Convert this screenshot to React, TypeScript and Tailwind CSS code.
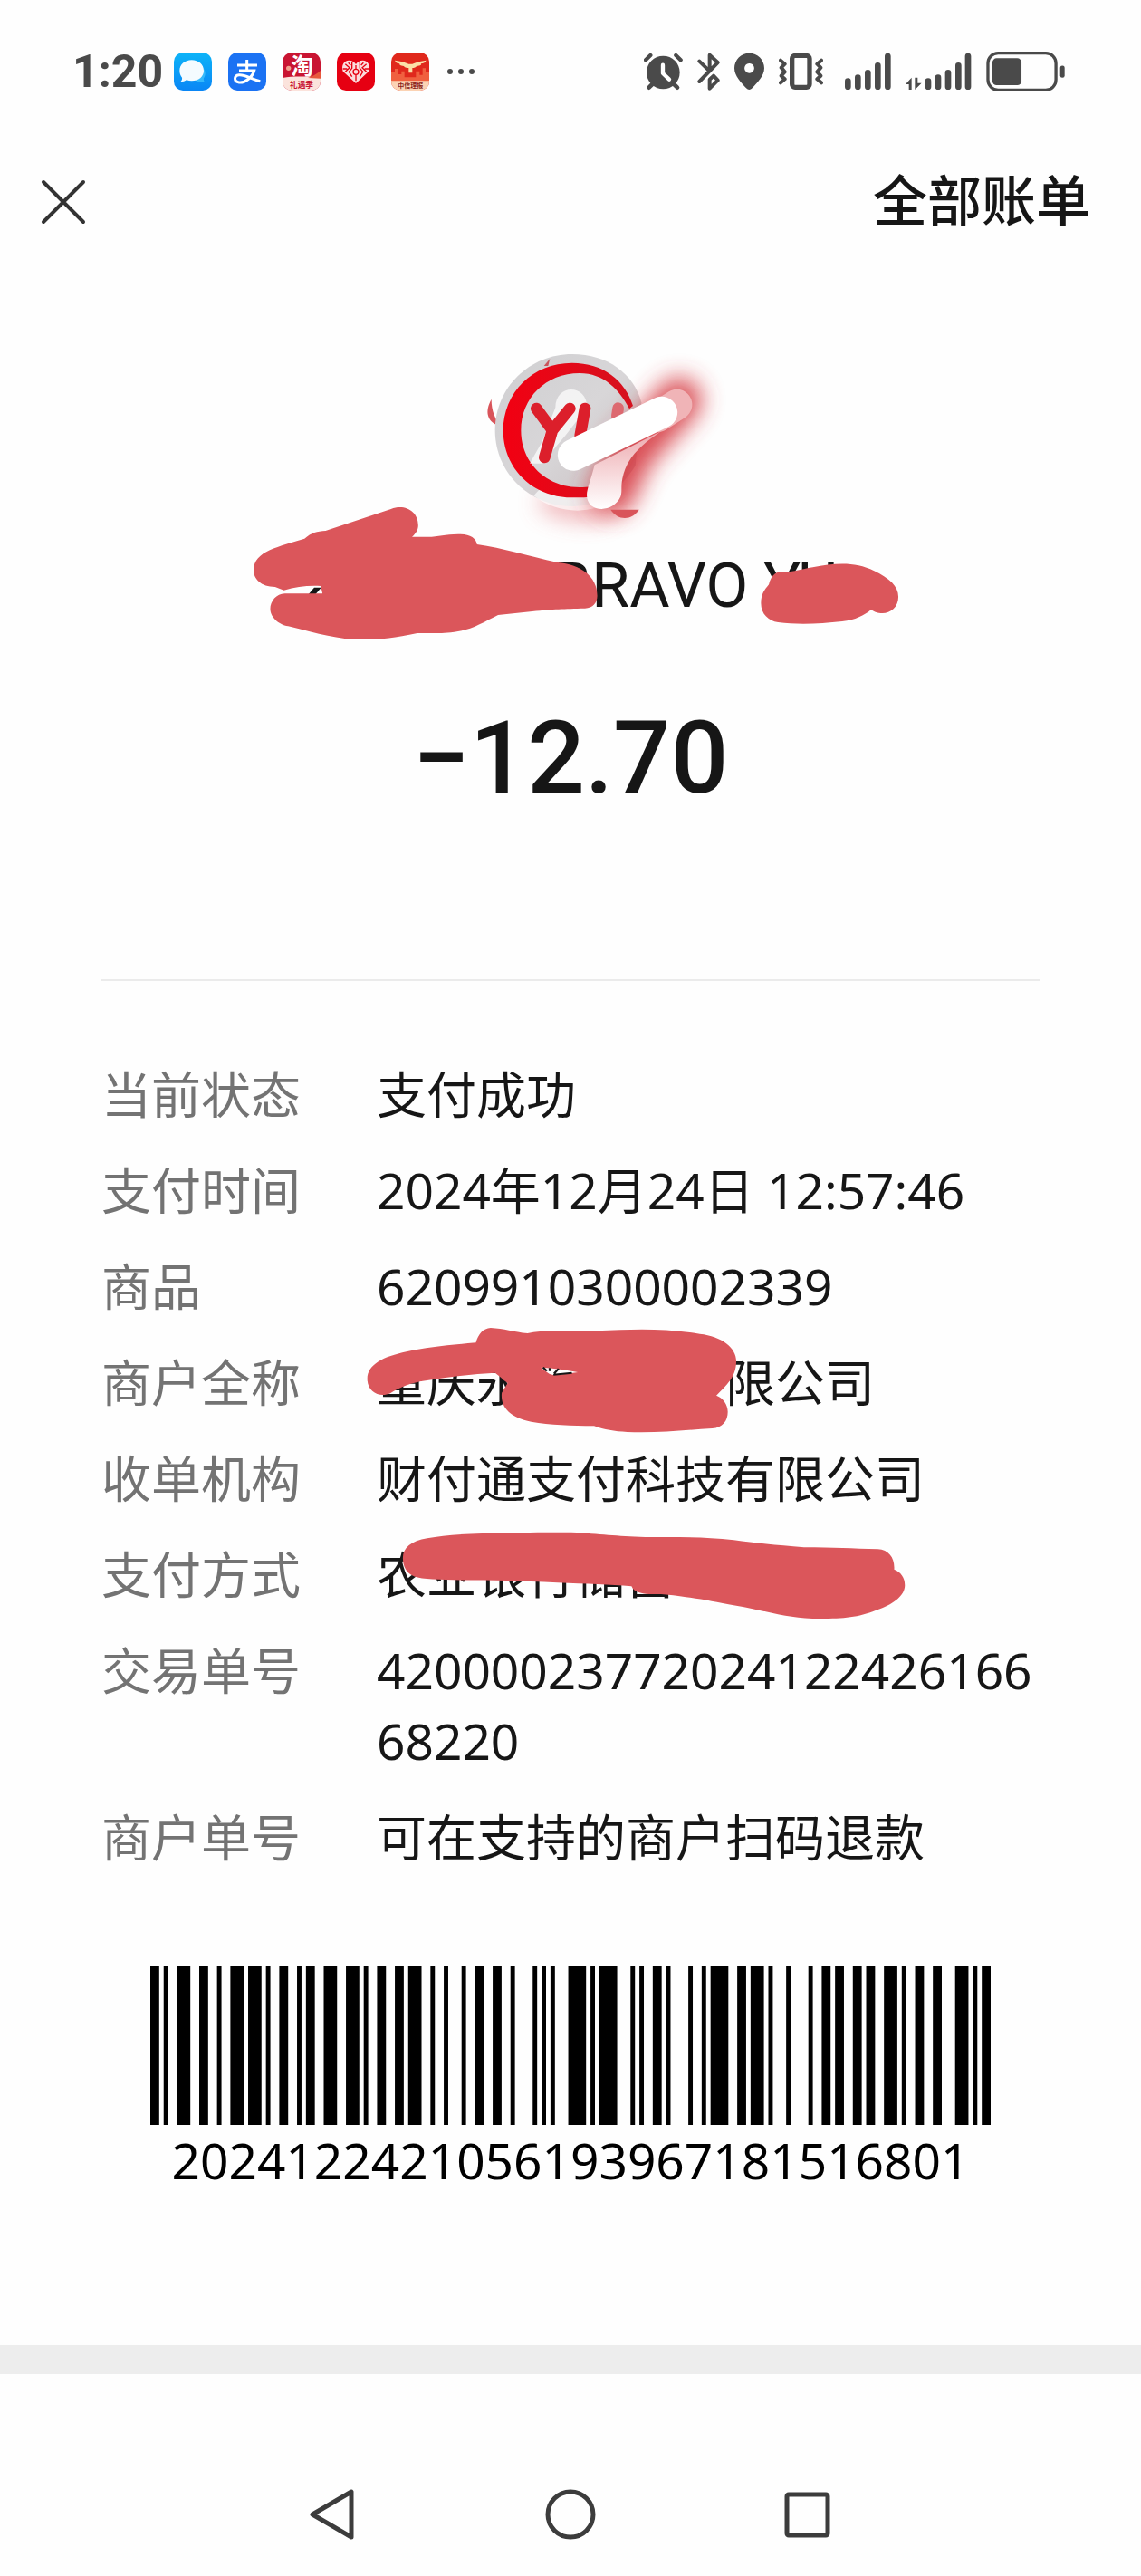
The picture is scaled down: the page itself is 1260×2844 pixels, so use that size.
import React from "react";

const INK = "#4a4a4a";
const MARKER = "#db565b";

// Code 128 bar/space widths for the symbols used by the receipt number
const CODE128: Record<string, string> = {
  "01": "222122",
  "05": "131222",
  "12": "112232",
  "20": "221231",
  "21": "213212",
  "24": "311222",
  "51": "213113",
  "61": "221411",
  "68": "141221",
  "71": "122114",
  "81": "121142",
  "93": "111341",
  "96": "114311",
};
const START_C = "211232";
const STOP = "2331112";

const RECEIPT_NO = "2024122421056193967181516801";
const CHECKSUM = "24";

const getBars = (value: string) => {
  const pairs = (value + CHECKSUM).match(/../g) ?? [];
  const widths = START_C + pairs.map((pair) => CODE128[pair]).join("") + STOP;
  const bars: { x: number; width: number }[] = [];
  let x = 0;
  widths.split("").forEach((w, i) => {
    if (i % 2 === 0) bars.push({ x, width: Number(w) });
    x += Number(w);
  });
  return { bars, total: x };
};

const Barcode = ({ value }: { value: string }) => {
  const { bars, total } = getBars(value);
  return (
    <svg viewBox={`0 0 ${total} 10`} preserveAspectRatio="none" className="w-full h-[175px]" role="img" aria-label={value}>
      {bars.map((bar) => (
        <rect key={bar.x} x={bar.x} y="0" width={bar.width} height="10" />
      ))}
    </svg>
  );
};

const AppIcons = () => (
  <div className="flex items-center gap-[18px]">
    <svg viewBox="0 0 126 126" className="w-[42px] h-[42px]">
      <defs>
        <linearGradient id="msg" x1="0" y1="0" x2="0" y2="1">
          <stop offset="0" stopColor="#0db4f8" />
          <stop offset="1" stopColor="#0a86f5" />
        </linearGradient>
      </defs>
      <rect width="126" height="126" rx="30" fill="url(#msg)" />
      <path d="M70 92c12 6 24 8 34 7-5-4-6-8-5-14 6-8 7-20 1-30z" fill="#35b9fb" />
      <path d="M59 25c23 0 40 15 40 35S82 94 59 94c-6 0-12-1-17-3-5 4-12 6-20 6 4-4 6-9 5-14-5-6-8-14-8-23 0-20 17-35 40-35z" fill="#f4fbff" />
    </svg>
    <svg viewBox="0 0 126 126" className="w-[42px] h-[42px]">
      <rect width="126" height="126" rx="30" fill="#1b72f3" />
      <g fill="none" stroke="#fff" strokeWidth="9">
        <path d="M30 42h66M62 24v36M36 60h50C80 82 56 101 36 99c-18-2-18-23 0-25 20-2 40 14 70 21" />
      </g>
    </svg>
    <svg viewBox="0 0 126 126" className="w-[42px] h-[42px] overflow-visible">
      <rect width="126" height="126" rx="30" fill="#c91532" />
      <path d="M0 84c40-8 85-4 126-2v14a30 30 0 0 1-30 30H30a30 30 0 0 1-30-30z" fill="#fbe3dc" />
      <path d="M84 84c14-4 28-12 42-24v26z" fill="#e8593d" />
      <circle cx="20" cy="52" r="8" fill="#f0a08c" />
      <text x="28" y="72" fontSize="74" fontWeight="700" fill="#fff" className="font-['Noto_Sans_CJK_SC',sans-serif]">淘</text>
      <text x="24" y="118" fontSize="26" fontWeight="700" fill="#c91532" className="font-['Noto_Sans_CJK_SC',sans-serif]">礼遇季</text>
    </svg>
    <svg viewBox="0 0 126 126" className="w-[42px] h-[42px]">
      <rect width="126" height="126" rx="30" fill="#e60012" />
      <path d="M63 102 20 62c-6-20 4-36 20-36 10 0 18 5 23 13 5-8 13-13 23-13 16 0 26 16 20 36z" fill="#fbdcdc" />
      <g fill="none" stroke="#e60012" strokeWidth="4">
        <path d="M28 38l14 12-14 14M98 38 84 50l14 14M50 30v22l-10 12 10 16M76 30v22l10 12-10 16M63 42v14M63 74v20M20 54h14M92 54h14M38 34l8 8M88 34l-8 8" />
        <circle cx="63" cy="64" r="9" />
      </g>
    </svg>
    <svg viewBox="0 0 126 126" className="w-[42px] h-[42px] overflow-visible">
      <rect width="126" height="126" rx="30" fill="#e0281c" />
      <path d="M0 64h12V54h10v18h12V62h10v20h38V62h12v12h10V52h10v12h12v36H0z" fill="#f0603f" />
      <path d="M12 26c18 2 34 6 46 12h12c12-6 28-10 46-12-4 8-10 10-18 11 4 3 0 7-14 8-2 5-8 6-14 6v16H58V51c-8 0-14-1-16-6-12-1-16-5-14-8-8-1-12-3-16-11z" fill="#fbe0a8" />
      <path d="M0 94h126v2a30 30 0 0 1-30 30H30A30 30 0 0 1 0 96z" fill="#fbd3b4" />
      <text x="22" y="117" fontSize="21" fontWeight="700" fill="#8c2418" className="font-['Noto_Sans_CJK_SC',sans-serif]">中信理报</text>
    </svg>
  </div>
);

const SystemIcons = () => (
  <div className="flex items-center gap-4">
    <svg viewBox="64 51 129 126" className="w-[43px] h-[42px]" fill="none" stroke={INK} strokeLinecap="round">
      <circle cx="128" cy="117" r="55" fill={INK} stroke="none" />
      <path d="M70 76 86 60M186 76 170 60" strokeWidth="13" />
      <path d="M92 156 81 167M164 156l11 11" strokeWidth="14" />
      <path d="M127 92v28l21 20" stroke="#fff" strokeWidth="13" strokeLinejoin="round" />
    </svg>
    <svg viewBox="240 51 75 126" className="w-[25px] h-[42px]" fill="none" stroke={INK} strokeWidth="12" strokeLinecap="round" strokeLinejoin="round">
      <path d="M247 80l34 33V59l27 25-61 63M281 146v24l27-27-14-15-13 12z" />
    </svg>
    <svg viewBox="363 51 99 126" className="w-[33px] h-[42px]">
      <path fillRule="evenodd" d="M412 53c28 0 50 22 50 50 0 26-24 48-40 66q-10 10-20 0c-16-18-39-40-39-66 0-28 22-50 49-50zm0 34a16 16 0 1 0 1 0z" fill={INK} />
    </svg>
    <svg viewBox="510 51 147 126" className="w-[49px] h-[42px]" fill="none" stroke={INK} strokeLinecap="round" strokeLinejoin="round">
      <rect x="554" y="61" width="58" height="105" rx="10" strokeWidth="16" />
      <path d="M516 77l14 12-12 12 12 14-12 13 12 11-14 12M651 77l-14 12 12 12-12 14 12 13-12 11 14 12" strokeWidth="12" />
    </svg>
    <svg viewBox="730 51 153 126" className="w-[51px] h-[42px] ml-2" stroke={INK} strokeWidth="20" strokeLinecap="round">
      <path d="M740 146v18M773 134v30M806 118v46M839 94v70M872 63v101" />
    </svg>
    <svg viewBox="931 51 219 126" className="w-[73px] h-[42px]" stroke={INK} strokeWidth="20" strokeLinecap="round">
      <path d="M1006 146v18M1039 134v30M1072 118v46M1106 94v70M1138 63v101" />
      <path d="M931 156l20-22v40h-9v-18zM962 134h9v18h13l-22 22z" strokeWidth="0" fill={INK} />
    </svg>
    <svg viewBox="1197 47 261 133" className="w-[87px] h-[44px]">
      <rect x="1202" y="52" width="227" height="123" rx="34" fill="none" stroke={INK} strokeWidth="10" />
      <rect x="1217" y="69" width="97" height="90" rx="14" fill={INK} />
      <rect x="1443" y="94" width="15" height="40" rx="7" fill={INK} />
    </svg>
  </div>
);

const MerchantLogo = () => (
  <svg viewBox="0 0 960 660" className="w-[320px] h-[220px] overflow-visible" role="img" aria-label="YU">
    <defs>
      <filter id="glow" filterUnits="userSpaceOnUse" x="0" y="-100" width="1160" height="960">
        <feGaussianBlur stdDeviation="38" />
      </filter>
      <linearGradient id="metal" x1="0" y1="0" x2="1" y2="1">
        <stop offset="0" stopColor="#cfcfd1" />
        <stop offset="0.5" stopColor="#d8d6d8" />
        <stop offset="1" stopColor="#c6bcbe" />
      </linearGradient>
      <linearGradient id="ring" x1="0" y1="0" x2="1" y2="0">
        <stop offset="0" stopColor="#f20012" />
        <stop offset="1" stopColor="#d5121f" />
      </linearGradient>
      <linearGradient id="tail" x1="0" y1="0" x2="0" y2="1">
        <stop offset="0" stopColor="#eda9ae" />
        <stop offset="1" stopColor="#ffffff" />
      </linearGradient>
    </defs>
    <path d="M128 212c-22 40-18 76 34 92-22-24-34-54-34-92z" fill="#d9545a" />
    <path d="M300 540 Q400 600 520 570" fill="none" stroke="#e88a90" strokeWidth="60" opacity="0.8" filter="url(#glow)" />
    <path d="M395 63c120 0 205 66 230 160l-20 210c-60 90-120 134-210 134-140 0-255-110-255-252S255 63 395 63z" fill="url(#metal)" />
    <path d="M268 532c80 62 190 64 270 12l-30-24-220-10z" fill="#fff" opacity="0.65" />
    <path d="M750 215 590 390 530 520" fill="none" stroke="#d63a43" strokeWidth="150" strokeLinecap="round" strokeLinejoin="round" opacity="0.9" filter="url(#glow)" />
    <path fillRule="evenodd" d="M395 92c104 0 176 58 202 142l-12 10C552 180 500 126 420 126c-112 0-194 82-194 190s84 188 194 188c30 0 50-4 80-16l-30 46c-20 4-50 4-75 4-130 0-228-96-228-222S265 92 395 92z" fill="url(#ring)" />
    <path d="M302 102 322 78l-6 24z" fill="#c9545c" />
    <path d="M340 240c0-80 105-80 105 0l-70 90-80 95h-40l40-70z" fill="#fff" opacity="0.7" />
    <g fill="none" stroke="#dc1f2b" strokeWidth="38" strokeLinecap="round" strokeLinejoin="round">
      <path d="M277 243l53 72 58-72M330 315 304 405" />
      <path d="M438 243l-16 90" />
      <path d="M548 242l-4 26" stroke="#dd6970" />
    </g>
    <path d="M523 578h94c-26 38-70 36-94 0z" fill="#d9545a" />
    <path d="M470 430c-10 40-26 80-26 100 0 58 86 62 112 5 6-20 0-30 6-60 14-70 60-110 130-158z" fill="url(#tail)" />
    <path d="M742 230 680 270" stroke="#f0b4b7" strokeWidth="102" strokeLinecap="round" />
    <path d="M400 397 692 256" stroke="#fff" strokeWidth="105" strokeLinecap="round" />
  </svg>
);

const TitleMarks = () => (
  <svg viewBox="-20 0 1568 540" preserveAspectRatio="none" className="absolute left-0 -top-[50px] w-[760px] h-[180px]" aria-hidden="true">
    <path d="M166 350 180 326h16l-14 24z" fill="#161616" />
    <path
      d="M355 66c32-18 62 8 62 54 0 16-6 28-14 38h36c26 0 40-10 74-9 24 1 36 14 38 34 60 12 114 38 184 60 50 6 90 44 90 110 0 24-10 40-28 42-50 2-70 2-120 10l-78 12c-34 24-60 50-100 56-36 6-54 4-84 4-50 16-82 21-126 21-54 0-100-20-164-43-22-2-45-28-45-58 0-26 14-50 33-51h86l-4-25c-30-2-56 2-84 14l-20-11c-32 0-49-26-49-56 0-64 60-78 116-104 16-20 28-24 48-26z"
      fill={MARKER}
    />
    <path
      d="M1198 378c0-30 8-44 18-62 4-24 12-42 30-42 26 2 40-8 70-15 50-14 96-20 140 12 34 24 55 50 55 86 0 34-18 54-36 54-12 0-18-4-26-12-16 20-36 34-66 39-50 8-100 12-146 3-22-4-39-28-39-63z"
      fill={MARKER}
    />
  </svg>
);

const MerchantMarks = () => (
  <svg viewBox="60 70 1020 360" preserveAspectRatio="none" className="absolute -left-3 -top-6 w-[416px] h-[120px]" aria-hidden="true">
    <path
      fillRule="evenodd"
      d="M358 128c6-28 20-48 40-49 36 2 62 14 100 18 50-14 120-2 186-8 100-6 180-10 280 10 60 8 99 46 99 90 0 54-30 84-54 114 18 8 31 30 31 54 0 30-14 52-42 55-80 6-150 16-230 12-36-2-62-8-90-20-60-2-120-2-170-14-60-14-84-50-80-96l16-32c-12-10-20-22-34-34-60 4-120 12-180 24-46 8-76 22-104 44-30 16-62-6-62-48 0-48 44-74 106-90 56-16 120-22 188-30zM534 210c16 14 20 26 44 25l56-9c-32-8-66-14-100-16z"
      fill={MARKER}
    />
    <path d="M540 210l10 12M558 212v10M582 214l-12 16M568 234l50-6" stroke="#161616" strokeWidth="6" />
  </svg>
);

const PaymentMarks = () => (
  <svg viewBox="150 740 1390 310" preserveAspectRatio="none" className="absolute left-6 -top-3 w-[567px] h-[103px]" aria-hidden="true">
    <path
      d="M162 840c0-34 22-58 66-66 80-18 200-20 390-20 80 6 120 12 200 16 80 0 150-2 240 10 60 10 110 16 190 24 80 0 130 4 200 6 30 2 46 30 44 68 18 8 29 28 29 52 0 34-30 60-66 78-60 30-100 34-184 33-80-4-130-28-210-44-70-16-110-26-186-36-30-4-50 2-70-6-12-4-20-10-24-22-60-6-120-8-200-12-100-6-180-8-260-8-60-2-106-2-128-12-20-10-31-32-31-61z"
      fill={MARKER}
    />
  </svg>
);

const details: { label: string; value: React.ReactNode }[] = [
  { label: "当前状态", value: "支付成功" },
  { label: "支付时间", value: "2024年12月24日 12:57:46" },
  { label: "商品", value: "6209910300002339" },
  {
    label: "商户全称",
    value: (
      <>
        重庆永<span className="inline-block w-[220px]" />限公司
        <MerchantMarks />
      </>
    ),
  },
  { label: "收单机构", value: "财付通支付科技有限公司" },
  {
    label: "支付方式",
    value: (
      <>
        农业银行储蓄
        <PaymentMarks />
      </>
    ),
  },
  { label: "交易单号", value: "4200002377202412242616668220" },
  { label: "商户单号", value: "可在支持的商户扫码退款" },
];

const App = () => {
  return (
    <div className="min-h-screen flex flex-col bg-[#fefefe] text-[#161616] font-['Noto_Sans','Noto_Sans_CJK_SC',sans-serif]">
      <div className="h-[158px] pl-20 pr-[84px] flex items-center justify-between">
        <div className="flex items-center gap-3">
          <div className="text-[50px] leading-[60px] font-bold text-[#4a4a4a] font-['Roboto',sans-serif]">1:20</div>
          <AppIcons />
          <div className="flex gap-[6px] ml-2">
            <span className="w-[6px] h-[6px] rounded-full bg-[#4a4a4a]" />
            <span className="w-[6px] h-[6px] rounded-full bg-[#4a4a4a]" />
            <span className="w-[6px] h-[6px] rounded-full bg-[#4a4a4a]" />
          </div>
        </div>
        <SystemIcons />
      </div>

      <header className="h-[126px] pl-11 pr-14 flex items-center justify-between">
        <button type="button" aria-label="关闭" className="mt-1">
          <svg viewBox="0 0 52 52" className="w-[52px] h-[52px]" stroke="#333" strokeWidth="4" strokeLinecap="round">
            <path d="M4 4l44 44M48 4 4 48" />
          </svg>
        </button>
        <button type="button" className="text-[60px] leading-[72px] font-medium">全部账单</button>
      </header>

      <main className="flex-grow flex flex-col">
        <section className="pt-[86px] flex flex-col items-center">
          <div className="w-full flex justify-center pl-[60px]">
            <MerchantLogo />
          </div>
          <h1 className="relative w-[760px] pl-[361px] text-[68px] leading-[114px] whitespace-nowrap font-['Roboto',sans-serif]">
            BRAVO YU
            <TitleMarks />
          </h1>
          <p className="mt-[51px] text-[112px] leading-[164px] font-medium font-['Roboto',sans-serif]">−12.70</p>
        </section>

        <div className="mx-28 mt-[162px] border-t-2 border-[#ebebeb]" />

        <dl className="mx-28 mt-[86px] grid grid-cols-[304px_1fr] gap-y-7 text-[55px] leading-[78px]">
          {details.map((item) => (
            <React.Fragment key={item.label}>
              <dt className="text-[#737373]">{item.label}</dt>
              <dd className="relative break-all">{item.value}</dd>
            </React.Fragment>
          ))}
        </dl>

        <figure className="mx-[166px] mt-[104px] flex flex-col items-center">
          <Barcode value={RECEIPT_NO} />
          <figcaption className="text-[55px] leading-[78px] text-black">{RECEIPT_NO}</figcaption>
        </figure>
      </main>

      <div className="h-8 bg-[#ededed]" />

      <nav className="h-[223px] pt-[86px] flex items-center justify-center gap-[206px]">
        <button type="button" aria-label="返回">
          <svg viewBox="0 0 56 56" className="w-14 h-14" fill="none" stroke="#3c3c3c" strokeWidth="5" strokeLinejoin="round">
            <path d="M48 3v50L5 28z" />
          </svg>
        </button>
        <button type="button" aria-label="主屏幕">
          <svg viewBox="0 0 56 56" className="w-14 h-14" fill="none" stroke="#3c3c3c" strokeWidth="5">
            <circle cx="28" cy="28" r="25" />
          </svg>
        </button>
        <button type="button" aria-label="最近任务">
          <svg viewBox="0 0 56 56" className="w-14 h-14" fill="none" stroke="#3c3c3c" strokeWidth="5">
            <rect x="5" y="6" width="45" height="45" rx="2" />
          </svg>
        </button>
      </nav>
    </div>
  );
};

export default App;
